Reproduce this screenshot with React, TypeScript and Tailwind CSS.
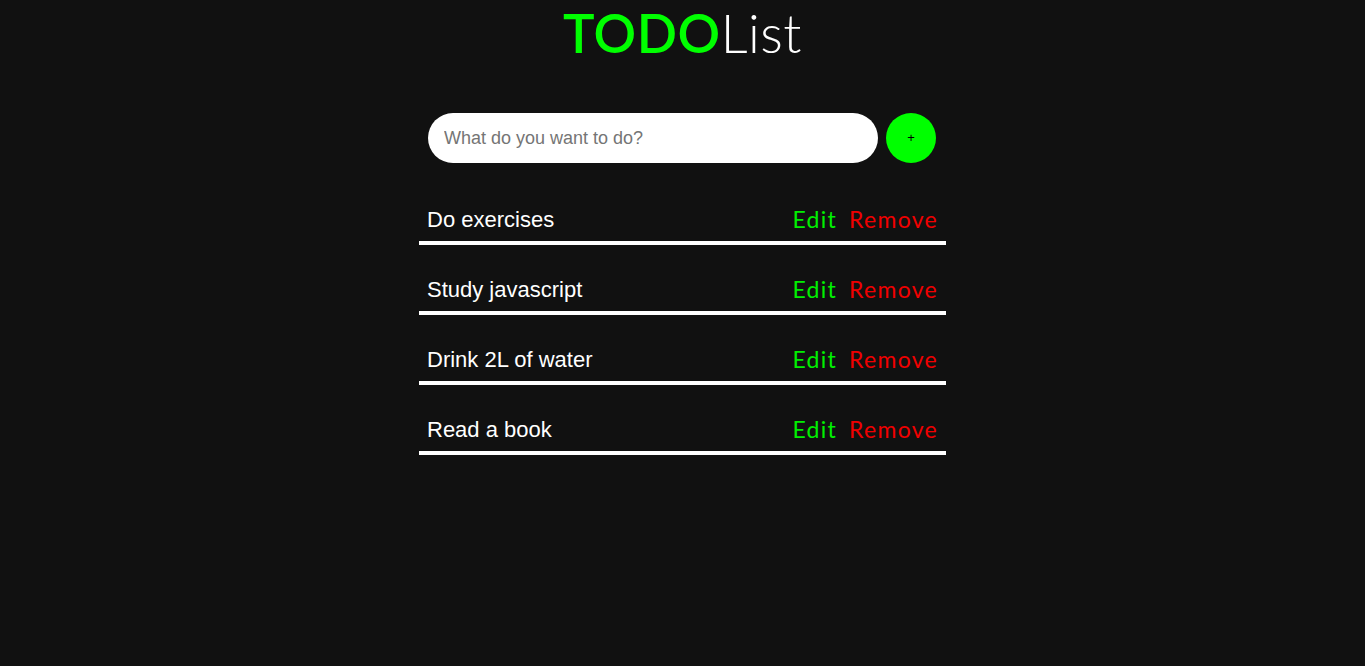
import { useState } from "react";

const INITIAL_TODOS = ["Do exercises", "Study javascript", "Drink 2L of water", "Read a book"];

export default function App() {
  const [todos, setTodos] = useState<string[]>(INITIAL_TODOS);
  const [text, setText] = useState("");

  const addTodo = () => {
    if (!text.trim()) return;
    setTodos([...todos, text.trim()]);
    setText("");
  };

  return (
    <main className="min-h-screen bg-[#111111] font-['Liberation_Sans',Arial,sans-serif]">
      <div className="mx-auto w-[527px] flex flex-col items-center">
        {/* Title */}
        <h1 className="mt-[2px] text-[53px] leading-[62px] tracking-[0.5px] font-['Lato',sans-serif]">
          <span className="text-[#00ff00] font-semibold">TODO</span>
          <span className="text-white font-light">List</span>
        </h1>

        {/* Input row */}
        <div className="mt-[49px] flex items-center gap-2 pr-[1px]">
          <input
            type="text"
            placeholder="What do you want to do?"
            value={text}
            onChange={(e) => setText(e.target.value)}
            className="w-[450px] h-[50px] rounded-full bg-white px-4 text-[18px] text-gray-800 placeholder-[#757575] outline-none"
          />
          <button
            onClick={addTodo}
            className="w-[50px] h-[50px] rounded-full bg-[#00ff00] text-black text-[13px] flex items-center justify-center"
          >
            +
          </button>
        </div>

        {/* Todo list */}
        <ul className="w-full mt-[34px] flex flex-col gap-[22px]">
          {todos.map((todo, i) => (
            <li key={i} className="h-[48px] flex items-center justify-between pl-2 pr-[8px] border-b-4 border-white">
              <span className="text-white text-[22px]">{todo}</span>
              <div className="flex gap-[12px] text-[23px] font-['Lato',sans-serif] tracking-[1.3px]">
                <button className="text-[#00f000]">Edit</button>
                <button
                  onClick={() => setTodos(todos.filter((_, j) => j !== i))}
                  className="text-[#f00000]"
                >
                  Remove
                </button>
              </div>
            </li>
          ))}
        </ul>
      </div>
    </main>
  );
}
